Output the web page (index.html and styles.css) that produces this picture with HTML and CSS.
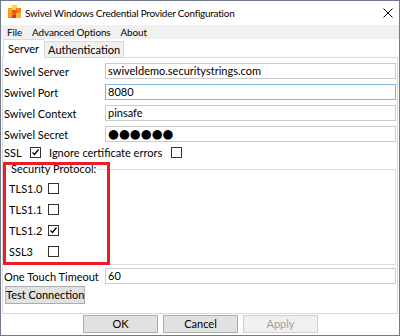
FILE: index.html
```html
<!DOCTYPE html>
<html lang="en">
<head>
    <meta charset="UTF-8">
    <meta name="viewport" content="width=device-width, initial-scale=1.0">
    <title>Swivel Windows Credential Provider Configuration</title>
    <link rel="stylesheet" href="styles.css">
</head>
<body>
    <div class="window">
        <div class="titlebar">
            <svg class="app-icon" viewBox="0 0 13 13" width="13" height="13">
                <rect x="0" y="3" width="5" height="5" fill="#f7a21b"/>
                <rect x="4" y="0" width="5" height="5" fill="#ffd23f"/>
                <rect x="8" y="3" width="5" height="5" fill="#f08a0c"/>
                <rect x="4" y="5" width="5" height="5" fill="#e8541a"/>
                <rect x="0" y="8" width="5" height="5" fill="#f39a1e"/>
                <rect x="8" y="8" width="5" height="5" fill="#f6b42a"/>
                <rect x="4" y="10" width="4" height="3" fill="#d9401a"/>
            </svg>
            <span class="title">Swivel Windows Credential Provider Configuration</span>
            <svg class="close" viewBox="0 0 10 10" width="10" height="10">
                <path d="M0.5 0.5 L9.5 9.5 M9.5 0.5 L0.5 9.5" stroke="#000" stroke-width="1" fill="none"/>
            </svg>
        </div>

        <div class="menubar">
            <span>File</span>
            <span>Advanced Options</span>
            <span>About</span>
        </div>

        <div class="tabs">
            <div class="tab active">Server</div>
            <div class="tab">Authentication</div>
        </div>

        <div class="tabpage">
            <div class="field">
                <label>Swivel Server</label>
                <div class="textbox">swiveldemo.securitystrings.com</div>
            </div>
            <div class="field">
                <label>Swivel Port</label>
                <div class="textbox focused">8080</div>
            </div>
            <div class="field">
                <label>Swivel Context</label>
                <div class="textbox">pinsafe</div>
            </div>
            <div class="field">
                <label>Swivel Secret</label>
                <div class="textbox secret">●●●●●●</div>
            </div>

            <div class="checks">
                <span class="ssl-label">SSL</span>
                <span class="checkbox checked"><svg viewBox="0 0 9 9"><path d="M1.5 4.5 L3.5 6.5 L7.5 1.5" stroke="#000" stroke-width="1.3" fill="none"/></svg></span>
                <span class="ignore-label">Ignore certificate errors</span>
                <span class="checkbox"></span>
            </div>

            <div class="group-wrap">
                <fieldset class="group">
                    <legend>Security Protocol:</legend>
                    <div class="proto"><span class="proto-label">TLS1.0</span><span class="checkbox"></span></div>
                    <div class="proto"><span class="proto-label">TLS1.1</span><span class="checkbox"></span></div>
                    <div class="proto"><span class="proto-label">TLS1.2</span><span class="checkbox checked"><svg viewBox="0 0 9 9"><path d="M1.5 4.5 L3.5 6.5 L7.5 1.5" stroke="#000" stroke-width="1.3" fill="none"/></svg></span></div>
                    <div class="proto"><span class="proto-label">SSL3</span><span class="checkbox"></span></div>
                </fieldset>
                <div class="highlight"></div>
            </div>

            <div class="field timeout">
                <label>One Touch Timeout</label>
                <div class="textbox">60</div>
            </div>
            <button class="btn test">Test Connection</button>
        </div>

        <div class="footer">
            <button class="btn dialog">OK</button>
            <button class="btn dialog">Cancel</button>
            <button class="btn dialog" disabled>Apply</button>
        </div>
    </div>
</body>
</html>
```

FILE: styles.css
```css
body {
    margin: 0;
    font-family: 'Lato', sans-serif;
    font-size: 11px;
    color: #000;
    background: #fff;
}

.window {
    width: 400px;
    height: 336px;
    box-sizing: border-box;
    border: 1px solid #6f7b8c;
    background: #fff;
    display: flex;
    flex-direction: column;
    white-space: nowrap;
}

.titlebar {
    height: 24px;
    display: flex;
    align-items: center;
    padding: 0 6px 0 7px;
}

.app-icon {
    margin-right: 4px;
    margin-top: -3px;
}

.title {
    flex: 1;
    font-size: 9.9px;
    letter-spacing: -0.2px;
}

.menubar {
    height: 14px;
    line-height: 14px;
    background: #f0f0f0;
    display: flex;
    gap: 10px;
    padding-left: 6px;
    font-size: 9.9px;
    letter-spacing: -0.1px;
}

.tabs {
    height: 18px;
    display: flex;
    align-items: flex-end;
    padding-left: 2px;
}

.tab {
    height: 16px;
    line-height: 15px;
    box-sizing: border-box;
    border: 1px solid #d9d9d9;
    border-bottom: none;
    background: #f0f0f0;
    padding: 0 3px;
}

.tab.active {
    height: 19px;
    line-height: 17px;
    margin-bottom: -1px;
    background: #fff;
    padding: 0 5px 0 4px;
    position: relative;
    z-index: 1;
    border-right: none;
}

.tabpage {
    height: 257px;
    box-sizing: border-box;
    margin: 0 1px;
    border: 1px solid #d9d9d9;
    padding: 5px 0 0 1px;
}

.field {
    display: flex;
    height: 16px;
    margin-bottom: 5px;
    align-items: center;
}

.field label {
    width: 101px;
    flex: none;
}

.textbox {
    flex: 1;
    height: 16px;
    box-sizing: border-box;
    margin-right: 1px;
    border: 1px solid #cbcbcb;
    padding-left: 2px;
    line-height: 14px;
}

.textbox.focused {
    border-color: #7eb4ea;
}

.textbox.secret {
    font-family: 'DejaVu Sans', sans-serif;
    font-size: 12.5px;
}

.checks {
    display: flex;
    align-items: center;
    height: 11px;
    margin-top: 3px;
}

.ssl-label {
    width: 26px;
}

.ignore-label {
    margin-left: 8px;
    width: 122px;
}

.checkbox {
    width: 11px;
    height: 11px;
    box-sizing: border-box;
    border: 1px solid #333;
    background: #fff;
    display: flex;
    align-items: center;
    justify-content: center;
    flex: none;
}

.checkbox svg {
    width: 9px;
    height: 9px;
}

.group-wrap {
    position: relative;
    margin-top: 4px;
}

.group {
    margin: 0 1px 0 1px;
    padding: 6px 0 5px 3px;
    border: 1px solid #dcdcdc;
    height: 103px;
    box-sizing: border-box;
}

.group legend {
    padding: 0 2px;
    line-height: 14px;
}

.proto {
    display: flex;
    align-items: center;
    height: 13px;
    margin-bottom: 8px;
}

.proto-label {
    width: 39px;
}

.highlight {
    position: absolute;
    left: -1px;
    top: 0;
    width: 107px;
    height: 103px;
    box-sizing: border-box;
    border: 3px solid #ec1c24;
}

.timeout {
    margin-top: 3px;
    margin-bottom: 2px;
}

.btn {
    font-family: 'Lato', sans-serif;
    font-size: 11px;
    color: #000;
    background: #e1e1e1;
    border: 1px solid #adadad;
    height: 18px;
    padding: 0;
    line-height: 16px;
    white-space: nowrap;
}

.test {
    margin-left: 1px;
    width: 80px;
}

.footer {
    display: flex;
    gap: 5px;
    padding: 1px 0 0 82px;
}

.dialog {
    width: 75px;
}

.dialog:disabled {
    background: #f0f0f0;
    border-color: #d0d0d0;
    color: #a0a0a0;
}
```
